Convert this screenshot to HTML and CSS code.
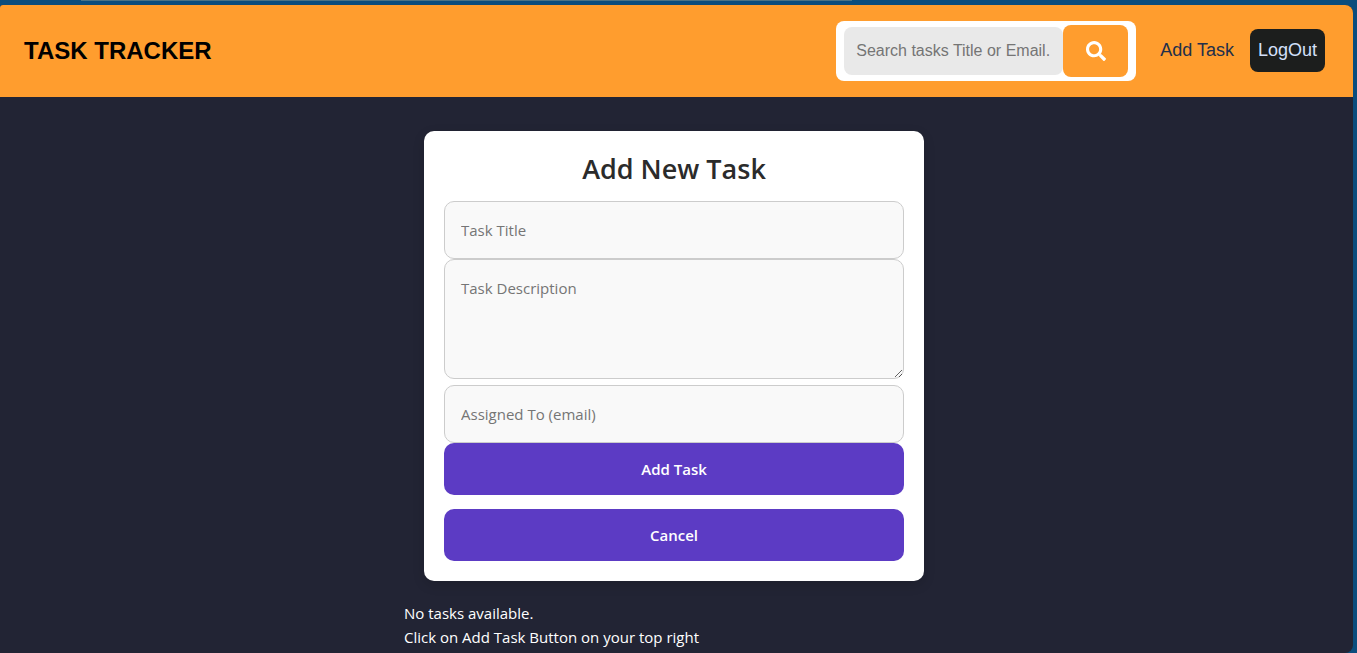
FILE: index.html
```html
<!DOCTYPE html>
<html lang="en">
<head>
<meta charset="utf-8">
<meta name="viewport" content="width=device-width, initial-scale=1">
<title>Task Tracker</title>
<link rel="stylesheet" href="styles.css">
</head>
<body>
<div class="tab-line"></div>
<div class="app">
  <header class="navbar">
    <h1 class="brand">TASK TRACKER</h1>
    <div class="nav-actions">
      <form class="search" role="search">
        <input class="search-input" type="text" aria-label="Search tasks" placeholder="Search tasks Title or Email.">
        <button class="search-button" type="button" aria-label="Search">
          <svg class="search-icon" viewBox="0 0 512 512" aria-hidden="true"><path fill="currentColor" d="M505 442.700 405.300 343c-4.500-4.500-10.600-7-17-7H372c27.600-35.300 44-79.700 44-128C416 93.100 322.900 0 208 0S0 93.100 0 208s93.100 208 208 208c48.300 0 92.700-16.400 128-44v16.300c0 6.400 2.500 12.500 7 17l99.700 99.700c9.400 9.400 24.600 9.400 33.900 0l28.300-28.300c9.400-9.400 9.400-24.600.1-34zM208 336c-70.700 0-128-57.200-128-128 0-70.700 57.200-128 128-128 70.700 0 128 57.200 128 128 0 70.700-57.200 128-128 128z"/></svg>
        </button>
      </form>
      <a class="nav-link" href="#task-form">Add Task</a>
      <button class="logout" type="button">LogOut</button>
    </div>
  </header>
  <main class="content">
    <div class="column">
      <form class="card" id="task-form">
        <h2 class="card-title">Add New Task</h2>
        <input class="field" type="text" aria-label="Task Title" placeholder="Task Title">
        <textarea class="field field-area" aria-label="Task Description" placeholder="Task Description"></textarea>
        <input class="field" type="email" aria-label="Assigned To (email)" placeholder="Assigned To (email)">
        <div class="actions">
          <button class="button" type="button">Add Task</button>
          <button class="button" type="button">Cancel</button>
        </div>
      </form>
      <div class="empty">
        <p>No tasks available.</p>
        <p>Click on Add Task Button on your top right</p>
      </div>
    </div>
  </main>
</div>
</body>
</html>
```
FILE: styles.css
```css
* { box-sizing: border-box; }
body {
  margin: 0;
  min-height: 100vh;
  display: flex;
  flex-direction: column;
  padding-right: 4px;
  background: #0b4d7d;
  font-family: "Open Sans", "Noto Sans", sans-serif;
  font-size: 15px;
  line-height: 24px;
}
h1, h2, p { margin: 0; }
button { border: 0; cursor: pointer; }
.tab-line {
  height: 1px;
  width: 57%;
  margin: 0 0 4px 6%;
  background: #4b7385;
}
.app {
  flex: 1;
  background: #222434;
  border-radius: 3px 8px 8px 0;
  overflow: hidden;
}
.navbar {
  display: flex;
  align-items: center;
  justify-content: space-between;
  padding: 16px 28px 16px 24px;
  background: #ff9d2e;
  font-family: "Liberation Sans", Arial, sans-serif;
}
.brand { font-size: 24px; line-height: 32px; color: #000; }
.nav-actions { display: flex; align-items: center; }
.search {
  display: flex;
  align-items: center;
  width: 300px;
  padding: 4px 8px;
  margin-right: 24px;
  background: #fff;
  border-radius: 8px;
}
.search-input {
  flex: 1;
  min-width: 0;
  height: 48px;
  padding: 0 12px;
  border: 0;
  border-radius: 8px;
  background: #e9e9e9;
  font: 16px "Liberation Sans", Arial, sans-serif;
}
.search-button {
  display: flex;
  align-items: center;
  justify-content: center;
  width: 65px;
  height: 52px;
  padding: 0;
  border-radius: 8px;
  background: #ff9d2e;
  color: #fff;
}
.search-icon { width: 20px; height: 20px; }
.nav-link {
  margin-right: 16px;
  padding-bottom: 2px;
  font-size: 18px;
  color: #222f4b;
  text-decoration: none;
}
.logout {
  margin-bottom: 2px;
  padding: 8px;
  border-radius: 8px;
  background: #1c1e1d;
  color: #d3e0fa;
  font: 18px/27px "Liberation Sans", Arial, sans-serif;
}
.content { padding: 34px 5px 4px 0; }
.column {
  max-width: 540px;
  margin: 0 auto;
}
.card {
  display: flex;
  flex-direction: column;
  margin: 0 20px 20px;
  padding: 20px;
  border-radius: 10px;
  background: #fff;
  box-shadow: 0 4px 12px rgba(0, 0, 0, 0.15);
}
.card-title {
  margin-bottom: 14px;
  font-size: 27px;
  font-weight: 600;
  line-height: 36px;
  text-align: center;
  color: #2b2b2b;
}
.field {
  width: 100%;
  height: 58px;
  padding: 16px;
  border: 1px solid #ccc;
  border-radius: 10px;
  background: #f9f9f9;
  font: 15px/24px "Open Sans", "Noto Sans", sans-serif;
}
.field::placeholder, .search-input::placeholder { color: #757575; }
.field-area {
  height: 120px;
  margin-bottom: 6px;
  resize: vertical;
}
.actions { display: grid; gap: 14px; }
.button {
  height: 52px;
  border-radius: 10px;
  background: #5c3bc4;
  color: #fff;
  font: 600 15px/24px "Open Sans", "Noto Sans", sans-serif;
}
.empty { color: #fff; }
```
